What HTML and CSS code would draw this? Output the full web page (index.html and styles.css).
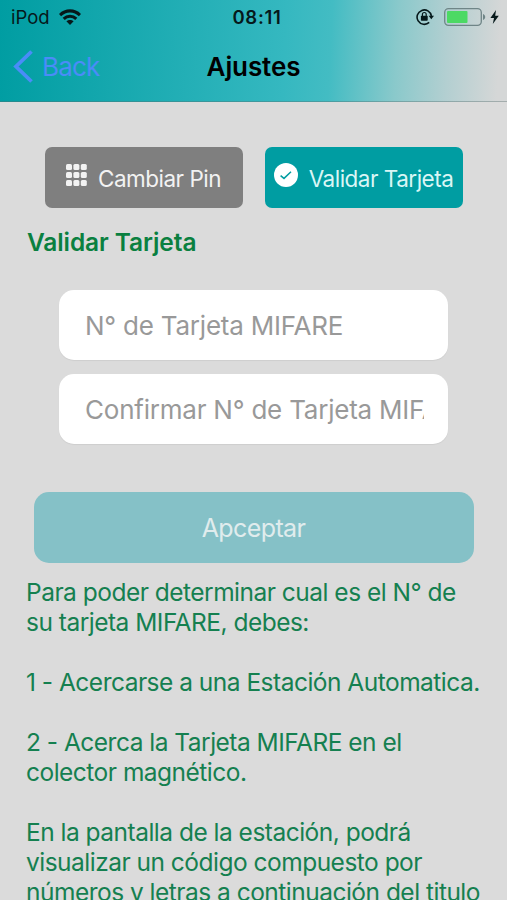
FILE: index.html
```html
<!DOCTYPE html>
<html lang="es">
  <head>
    <meta charset="utf-8" />
    <title>Ajustes</title>
    <meta name="viewport" content="width=device-width, initial-scale=1.0" />
    <link rel="stylesheet" href="styles.css">
  </head>

  <body>
    <header class="header">
      <div class="status">
        <div class="status-left">
          <span class="carrier">iPod</span>
          <svg class="wifi" viewBox="0 0 22 16" width="22" height="16">
            <g fill="none" stroke="currentColor" stroke-width="3.1">
              <path d="M1 6.1C6.6.4 15.4.4 21 6.1" />
              <path d="M4.7 9.8C8.3 6.4 13.7 6.4 17.3 9.8" />
            </g>
            <path fill="currentColor" d="M7.4 12.3C9.5 10.4 12.5 10.4 14.6 12.3L11 15.9z" />
          </svg>
        </div>
        <time class="clock">08:11</time>
        <div class="status-right">
          <svg class="lock" viewBox="0 0 18 18" width="18" height="18">
            <path fill="none" stroke="currentColor" stroke-width="1.6" d="M13.2 14.4A7.2 7.2 0 1 1 15.4 8" />
            <path fill="currentColor" d="M12.6 7.8H18L15.3 11.2z" />
            <rect fill="currentColor" x="4.9" y="7.8" width="6.8" height="5" rx=".7" />
            <path fill="none" stroke="currentColor" stroke-width="1.2" d="M6.4 8V6.4a1.9 1.9 0 0 1 3.8 0V8" />
          </svg>
          <svg class="battery" viewBox="0 0 42 18" width="42" height="18">
            <rect x=".7" y=".7" width="36.6" height="16.6" rx="3.8" fill="none" stroke="#6f8587" stroke-width="1.3" />
            <rect x="3" y="3" width="20.5" height="12" rx="1" fill="#4cd964" />
            <path fill="#6f8587" d="M39 6C41.9 7 41.9 11 39 12z" />
          </svg>
          <svg class="bolt" viewBox="0 0 9 14" width="9" height="14">
            <path fill="currentColor" d="M6 0L.4 8H4L2.8 14L8.8 5.7H5.2z" />
          </svg>
        </div>
      </div>
      <nav class="navbar">
        <a class="back" href="#">
          <svg viewBox="0 0 20 33" width="20" height="33">
            <path fill="none" stroke="currentColor" stroke-width="3.8" d="M18.5 1.5L3 16.5L18.5 31.5" />
          </svg>
          <span>Back</span>
        </a>
        <h1>Ajustes</h1>
      </nav>
    </header>

    <main>
      <div class="tabs">
        <button class="tab">
          <svg viewBox="0 0 21 22" width="21" height="22" fill="currentColor">
            <rect x="0" y="0" width="6" height="6" rx="1.5" />
            <rect x="7.4" y="0" width="6" height="6" rx="1.5" />
            <rect x="14.8" y="0" width="6" height="6" rx="1.5" />
            <rect x="0" y="8" width="6" height="6" rx="1.5" />
            <rect x="7.4" y="8" width="6" height="6" rx="1.5" />
            <rect x="14.8" y="8" width="6" height="6" rx="1.5" />
            <rect x="0" y="16" width="6" height="6" rx="1.5" />
            <rect x="7.4" y="16" width="6" height="6" rx="1.5" />
            <rect x="14.8" y="16" width="6" height="6" rx="1.5" />
          </svg>
          <span>Cambiar Pin</span>
        </button>
        <button class="tab tab-active">
          <svg viewBox="0 0 24 24" width="24" height="24">
            <circle cx="12" cy="12" r="12" fill="#fff" />
            <path fill="none" stroke="#009da2" stroke-width="1.5" d="M6.6 12.6L10 15.4L17 8.8" />
          </svg>
          <span>Validar Tarjeta</span>
        </button>
      </div>

      <h2>Validar Tarjeta</h2>

      <form class="form">
        <input type="text" placeholder="N° de Tarjeta MIFARE" />
        <input type="text" placeholder="Confirmar N° de Tarjeta MIFARE" />
        <button class="submit" type="button" disabled>Apceptar</button>
      </form>

      <div class="help">
        <p>Para poder determinar cual es el N° de<br>su tarjeta MIFARE, debes:</p>
        <p>1 - Acercarse a una Estación Automatica.</p>
        <p>2 - Acerca la Tarjeta MIFARE en el<br>colector magnético.</p>
        <p>En la pantalla de la estación, podrá<br>visualizar un código compuesto por<br>números y letras a continuación del titulo</p>
      </div>
    </main>
  </body>
</html>
```

FILE: styles.css
```css
* {
  box-sizing: border-box;
}
body {
  margin: 0;
  height: 900px;
  overflow: hidden;
  background: #dbdbdb;
  color: #000;
  font-family: Inter, 'Liberation Sans', sans-serif;
}
h1, h2, p {
  margin: 0;
}
svg {
  display: block;
  flex: none;
}
button {
  border: 0;
  font-family: inherit;
}

/* status bar + navigation */
.header {
  height: 102px;
  background: linear-gradient(93deg, #009da2 0%, #35b8c0 56%, #43bcc3 65%, #8ac9cb 78%, #b3cfd1 88%, #d5d7d7 98%);
  border-bottom: 1px solid rgba(90, 110, 110, 0.4);
}
.status {
  display: grid;
  grid-template-columns: 1fr auto 1fr;
  align-items: center;
  height: 34px;
  padding: 0 8px 0 11px;
  color: #06191b;
}
.status-left,
.status-right {
  display: flex;
  align-items: center;
}
.status-left {
  gap: 9px;
}
.status-right {
  justify-content: flex-end;
}
.carrier {
  font-size: 18.5px;
}
.clock {
  padding-left: 4px;
  font-size: 18.5px;
  font-weight: 600;
  letter-spacing: 0.7px;
}
.battery {
  margin-left: 10px;
}
.bolt {
  margin-left: 4px;
}
.navbar {
  display: grid;
  grid-template-columns: 1fr auto 1fr;
  align-items: center;
  height: 65px;
  padding: 0 13px;
}
.back {
  display: flex;
  align-items: center;
  gap: 9px;
  color: #4a8cf8;
  font-size: 26px;
  letter-spacing: -0.8px;
  text-decoration: none;
}
h1 {
  font-size: 26px;
  font-weight: 600;
  letter-spacing: -0.1px;
}

/* content */
.tabs {
  display: flex;
  justify-content: center;
  gap: 22px;
  padding-top: 45px;
}
.tab {
  display: flex;
  align-items: center;
  justify-content: center;
  gap: 11px;
  width: 198px;
  height: 61px;
  padding: 2px 0 0;
  border-radius: 7px;
  background: #7f7f7f;
  color: #f2f2f2;
  font-size: 22.5px;
  letter-spacing: -0.5px;
  white-space: nowrap;
}
.tab svg {
  margin-bottom: 7px;
}
.tab-active {
  background: #009da2;
  color: #d9f6f5;
}
h2 {
  margin: 19px 0 0 27px;
  color: #0a8040;
  font-size: 24.5px;
  font-weight: 600;
  line-height: 30px;
  letter-spacing: -0.1px;
}
.form {
  display: flex;
  flex-direction: column;
  align-items: center;
  gap: 14px;
  margin-top: 33px;
}
.form input {
  width: 389px;
  height: 70px;
  padding: 0 24px 0 26px;
  border: 0;
  border-radius: 15px;
  background: #fff;
  box-shadow: 0 1px 1px rgba(0, 0, 0, 0.06);
  font-family: inherit;
  font-size: 26px;
  letter-spacing: -0.22px;
}
.form input::placeholder {
  color: #999;
}
.submit {
  width: 440px;
  height: 71px;
  margin-top: 34px;
  padding-top: 1px;
  border-radius: 15px;
  background: #85c1c7;
  color: #e0eced;
  font-size: 25px;
  letter-spacing: -0.6px;
}
.help {
  display: grid;
  gap: 30px;
  margin: 14px 0 0 26px;
  color: #158050;
  font-size: 24.5px;
  letter-spacing: -0.51px;
  line-height: 30px;
  white-space: nowrap;
}
```
